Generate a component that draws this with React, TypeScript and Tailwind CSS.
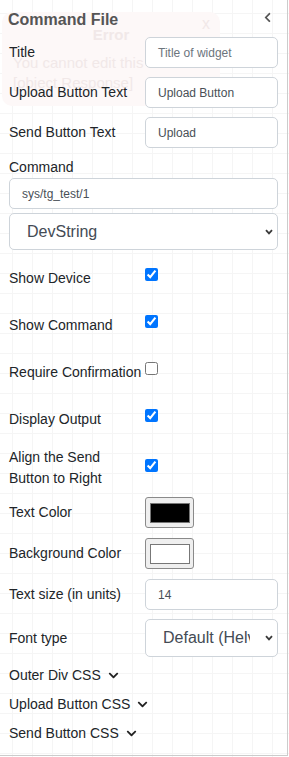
import React from "react";
import { FaChevronDown, FaChevronLeft } from "react-icons/fa";

const font = { fontFamily: '"Liberation Sans", Arial, sans-serif' };

function TextRow({ label, value, placeholder, top }: { label: string; value?: string; placeholder?: string; top: string }) {
  return (
    <div className={`flex items-center ${top}`}>
      <div className="w-[136px] shrink-0 text-[14px] leading-[21px] text-[#212529]">{label}</div>
      <div className="flex-1 h-[31px] flex items-center pl-[12px] border border-[#ced4da] rounded-[5px] bg-white text-[12px]">
        {value ? (
          <span className="text-[#495057]">{value}</span>
        ) : (
          <span className="text-[#6c757d]">{placeholder}</span>
        )}
      </div>
    </div>
  );
}

function SelectArrow() {
  return (
    <svg width="8" height="6" viewBox="0 0 8 6" className="shrink-0">
      <polyline points="1,1.2 4,4.4 7,1.2" fill="none" stroke="#3a3a3a" strokeWidth="1.8" />
    </svg>
  );
}

function CheckRow({ label, checked, top, wide }: { label: React.ReactNode; checked: boolean; top: string; wide?: boolean }) {
  return (
    <div className={`flex ${wide ? "items-center" : "items-start"} ${top}`}>
      <div className="w-[136px] shrink-0 text-[14px] leading-[21px] text-[#212529]">{label}</div>
      <input
        type="checkbox"
        defaultChecked={checked}
        className={wide ? "w-[13px] h-[13px] mb-[5px]" : "w-[13px] h-[13px]"}
      />
    </div>
  );
}

function ColorRow({ label, color, top }: { label: string; color: string; top: string }) {
  return (
    <div className={`flex items-center ${top}`}>
      <div className="w-[136px] shrink-0 text-[14px] leading-[21px] text-[#212529]">{label}</div>
      <div className="w-[49px] h-[31px] flex items-center justify-center rounded-[3px] border border-[#8a8a8a] bg-[#efefef]">
        <div className={`w-[40px] h-[20px] border border-[#777777] ${color}`} />
      </div>
    </div>
  );
}

function CssToggle({ label, top }: { label: string; top: string }) {
  return (
    <div className={`flex items-center text-[14px] leading-[21px] text-[#212529] ${top}`}>
      <span>{label}</span>
      <FaChevronDown size={11} className="ml-[7px] text-[#222]" />
    </div>
  );
}

export default function App() {
  return (
    <div
      style={font}
      className="relative w-[289px] h-[757px] overflow-hidden bg-white bg-[linear-gradient(to_right,#f5f5f5_1px,transparent_1px),linear-gradient(to_bottom,#f5f5f5_1px,transparent_1px)] bg-[size:20px_20px] bg-[position:12px_13px]"
    >
      {/* fading error toast behind the panel */}
      <div className="absolute left-[2px] top-[12px] w-[218px] h-[94px] rounded-[10px] bg-[#fdf8f8] text-[#f1e8e8]">
        <div className="absolute right-[10px] top-[0px] text-[16px]">x</div>
        <div className="text-center font-bold text-[15px] mt-[12px]">Error</div>
        <div className="pl-[11px] mt-[6px] text-[15px] leading-[20px] whitespace-nowrap">You cannot edit this device</div>
        <div className="pl-[11px] text-[15px] leading-[20px]">[object Response]</div>
      </div>

      <div className="relative w-[288px] h-[756px] border-r border-b border-[#cccccc] px-[9px] pt-[9px]">
        <div className="flex items-start justify-between h-[22px]">
          <div className="text-[16px] font-bold text-[#555555] leading-[22px] -ml-[1px]">Command File</div>
          <FaChevronLeft size={11} className="mt-[3px] mr-[5px] text-[#555555]" />
        </div>

        <TextRow label="Title" placeholder="Title of widget" top="mt-[6px]" />
        <TextRow label="Upload Button Text" value="Upload Button" top="mt-[9px]" />
        <TextRow label="Send Button Text" value="Upload" top="mt-[9px]" />

        <div className="mt-[9px] text-[14px] leading-[21px] text-[#212529]">Command</div>
        <div className="h-[31px] flex items-center pl-[12px] border border-[#ced4da] rounded-[5px] bg-white text-[12px] text-[#495057]">
          sys/tg_test/1
        </div>
        <div className="mt-[4px] h-[37px] flex items-center pl-[17px] pr-[4px] border border-[#ced4da] rounded-[5px] bg-white">
          <span className="flex-1 text-[16px] text-[#444b55]">DevString</span>
          <SelectArrow />
        </div>

        <CheckRow label="Show Device" checked top="mt-[18px]" />
        <CheckRow label="Show Command" checked top="mt-[26px]" />
        <CheckRow label="Require Confirmation" checked={false} top="mt-[26px]" />
        <CheckRow label="Display Output" checked top="mt-[26px]" />
        <CheckRow
          label={
            <>
              Align the Send
              <br />
              Button to Right
            </>
          }
          checked
          top="mt-[17px]"
          wide
        />

        <ColorRow label="Text Color" color="bg-black" top="mt-[8px]" />
        <ColorRow label="Background Color" color="bg-white" top="mt-[10px]" />

        <TextRow label="Text size (in units)" value="14" top="mt-[10px]" />

        <div className="flex items-center mt-[9px]">
          <div className="w-[136px] shrink-0 text-[14px] leading-[21px] text-[#212529]">Font type</div>
          <div className="flex-1 min-w-0 h-[38px] flex items-center pl-[17px] pr-[4px] border border-[#ced4da] rounded-[5px] bg-white">
            <span className="flex-1 min-w-0 overflow-hidden whitespace-nowrap text-[16px] text-[#444b55]">
              Default (Helvetica Neue, Helvetica, Arial, sans-serif)
            </span>
            <span className="ml-[15px] flex">
              <SelectArrow />
            </span>
          </div>
        </div>

        <CssToggle label="Outer Div CSS" top="mt-[8px]" />
        <CssToggle label="Upload Button CSS" top="mt-[8px]" />
        <CssToggle label="Send Button CSS" top="mt-[8px]" />
      </div>
    </div>
  );
}
